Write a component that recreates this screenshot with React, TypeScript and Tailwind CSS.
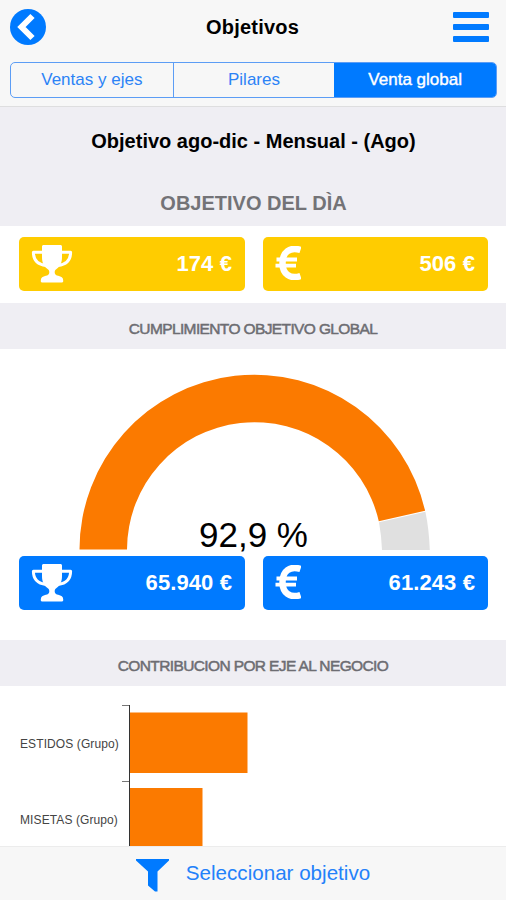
import type { ReactNode } from "react";

function Trophy() {
  return (
    <svg className="h-[38px] w-[42px]" viewBox="0 0 42 38" fill="none">
      <path
        d="M11 1.500C11 .7 11.700 0 12.500 0h17c.8 0 1.500.7 1.500 1.500V12c0 6-2 9.500-5.500 12-1.500 1-1.800 2-1.800 3.500 0 2.200 1.500 2.800 3.500 3.300 3 .8 5 1.800 5 4.500v1c0 .7-.4 1.200-1 1.200H10.800c-.6 0-1-.5-1-1.200v-1c0-2.700 2-3.700 5-4.500 2-.5 3.500-1.100 3.500-3.300 0-1.500-.3-2.500-1.800-3.500C13 21.500 11 18 11 12z"
        fill="white"
      />
      <path d="M11.500 7.300H2.400c0 7.500 4 12.200 12.600 13.200M30.500 7.300h9.100c0 7.500-4 12.200-12.600 13.200" stroke="white" strokeWidth="3" strokeLinejoin="round" />
    </svg>
  );
}

function Euro() {
  return (
    <svg className="mb-0.5 h-[34px] w-[26px]" viewBox="0 0 26 34" fill="none" stroke="white">
      <path d="M25.500 4C15 .5 7.500 6 7.500 17S15 33.500 25.500 30" strokeWidth="6.500" />
      <path d="M1.500 13.500h20.500M0.500 19.700h20.500" strokeWidth="3.800" />
    </svg>
  );
}

function Stat({ icon, value, color }: { icon: ReactNode; value: string; color: string }) {
  return (
    <div className={`flex h-[54px] items-center justify-between rounded-[5px] pr-[13px] pl-3 text-[22px] font-bold text-white ${color}`}>
      {icon}
      <span className="pb-0.5 tracking-[0.1px]">{value}</span>
    </div>
  );
}

function SectionTitle({ children }: { children: ReactNode }) {
  return (
    <h2 className="flex h-[46px] shrink-0 items-center justify-center bg-[#efeef3] pt-1.5 text-[15.500px] tracking-[-0.62px] text-[#6d6d72] [-webkit-text-stroke:0.5px_#6d6d72]">
      {children}
    </h2>
  );
}

export default function App() {
  return (
    <div className="flex h-[900px] w-[506px] flex-col overflow-hidden bg-white font-['Liberation_Sans',Arial,sans-serif] text-black">
      <header className="h-[107px] shrink-0 border-b border-[#dededf] bg-[#f7f7f7] pr-[9px] pl-[10px]">
        <div className="flex h-[62px] items-center justify-between pr-2 pb-2">
          <svg className="h-9 w-9" viewBox="0 0 36 36" fill="none">
            <circle cx="18" cy="18" r="18" fill="#007aff" />
            <path d="M22.500 7 11.500 18l11 11" stroke="white" strokeWidth="6" />
          </svg>
          <h1 className="pl-1.5 text-xl font-bold tracking-[0.2px]">Objetivos</h1>
          <svg className="h-[30px] w-9" viewBox="0 0 36 30" fill="#007aff">
            <rect width="36" height="6" rx="1" />
            <rect y="12" width="36" height="6" rx="1" />
            <rect y="24" width="36" height="6" rx="1" />
          </svg>
        </div>
        <div className="grid h-9 grid-cols-3 overflow-hidden rounded-[5px] border border-[#5c9df5] text-[17px] text-[#2c83f6]">
          <button>Ventas y ejes</button>
          <button className="border-l border-[#5c9df5]">Pilares</button>
          <button className="bg-[#007aff] text-white [-webkit-text-stroke:0.4px_white]">Venta global</button>
        </div>
      </header>
      <section className="flex h-[119px] shrink-0 flex-col items-center bg-[#efeef3] pl-px text-xl font-bold">
        <p className="pt-5">Objetivo ago-dic - Mensual - (Ago)</p>
        <p className="pt-[34px] text-[#737377]">OBJETIVO DEL DÌA</p>
      </section>
      <div className="grid h-[77px] shrink-0 grid-cols-[226px_225px] content-start gap-x-[18px] pt-[11px] pl-[19px]">
        <Stat icon={<Trophy />} value="174 €" color="bg-[#ffcc00]" />
        <Stat icon={<Euro />} value="506 €" color="bg-[#ffcc00]" />
      </div>
      <SectionTitle>CUMPLIMIENTO OBJETIVO GLOBAL</SectionTitle>
      <div className="h-[207px] shrink-0">
        <svg className="h-[207px] w-[506px]" viewBox="0 349 506 207">
          <path d="M79.500 549.500A175 175 0 0 1 425.100 510.700L378.800 521.300A127.500 127.500 0 0 0 127 549.500Z" fill="#fb7a00" />
          <path d="M425.400 511.700Q429 529 429.800 550H382Q381.500 536 379 522.300Z" fill="#e0e0e0" />
          <text x="253.500" y="547" textAnchor="middle" fontSize="35" fill="black">92,9 %</text>
        </svg>
      </div>
      <div className="grid h-[84px] shrink-0 grid-cols-[226px_225px] content-start gap-x-[18px] pl-[19px]">
        <Stat icon={<Trophy />} value="65.940 €" color="bg-[#007aff]" />
        <Stat icon={<Euro />} value="61.243 €" color="bg-[#007aff]" />
      </div>
      <SectionTitle>CONTRIBUCION POR EJE AL NEGOCIO</SectionTitle>
      <div className="min-h-0 flex-1 overflow-hidden">
        <svg className="h-[161px] w-[506px]" viewBox="0 686 506 161">
          <path d="M130 712.500h117.500v60.500H130zM130 788h72.500v60H130z" fill="#fb7a00" />
          <path d="M129.500 705v143" stroke="#333" />
          <path d="M122 705.500h7M122 781.500h7" stroke="#777" />
          <g fontSize="12" fill="#444" letterSpacing="0.100">
            <text x="20" y="747.500">ESTIDOS (Grupo)</text>
            <text x="20" y="823.500">MISETAS (Grupo)</text>
          </g>
        </svg>
      </div>
      <footer className="flex h-[54px] shrink-0 justify-center border-t border-[#ececec] bg-[#f7f7f7]">
        <button className="flex items-center gap-[17px] text-[20.600px] text-[#2381fa]">
          <svg className="mt-1 h-[33px] w-[33px]" viewBox="0 0 33 33" fill="#007aff">
            <path d="M0 0h33v1.500L21.500 12.500v20H19L12 26.500v-14L0 1.500z" />
          </svg>
          <span>Seleccionar objetivo</span>
        </button>
      </footer>
    </div>
  );
}
